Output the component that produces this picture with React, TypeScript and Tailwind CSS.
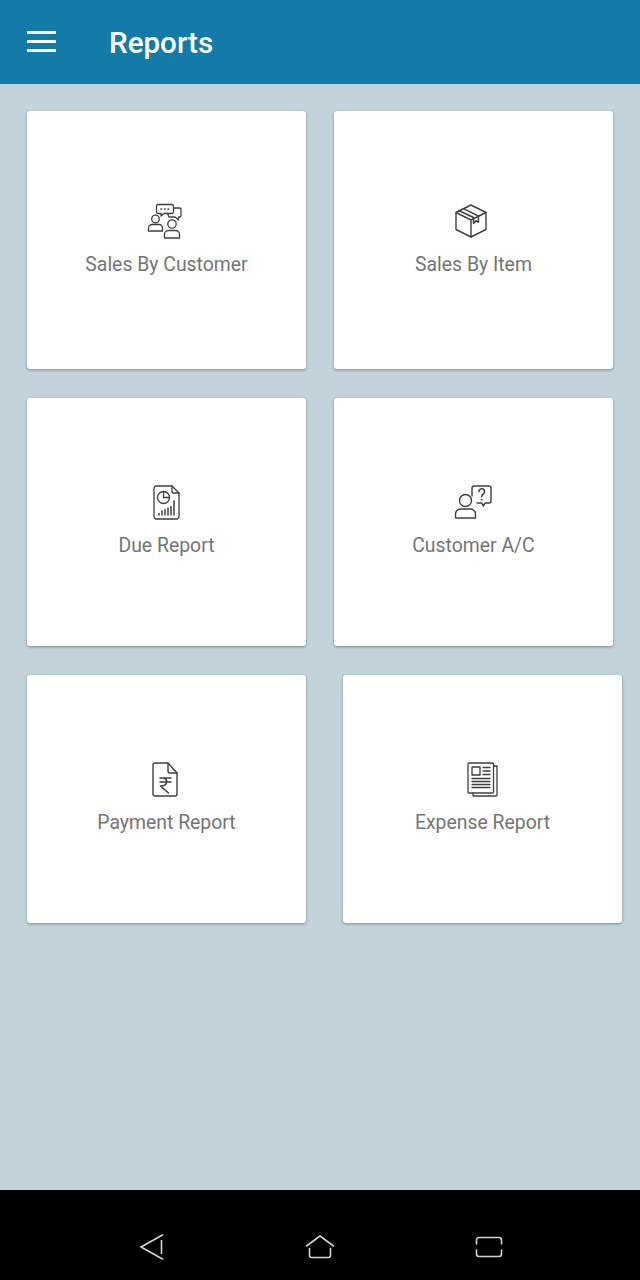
const CustomersIcon = () => (
  <svg className="mr-[4px]" width="36" height="36" viewBox="0 0 36 36" fill="none" stroke="#3f3f3f" strokeWidth="1.3" strokeLinejoin="round" strokeLinecap="round">
    <path d="M11 1.500h14a1.500 1.500 0 0 1 1.500 1.500v6a1.500 1.500 0 0 1-1.500 1.500h-8l-3 2.500v-2.500h-3a1.500 1.500 0 0 1-1.500-1.500v-6a1.500 1.500 0 0 1 1.500-1.500z" />
    <path d="M26.500 5h6a1.500 1.500 0 0 1 1.500 1.500v6a1.500 1.500 0 0 1-1.500 1.500h-1v3l-3.500-3h-6l-1.500-3.500" />
    <path d="M14 6h.6M17.500 6h.6M21 6h.6" strokeWidth="1.600" />
    <circle cx="8.500" cy="16" r="3.800" />
    <path d="M1.500 28v-3a3.500 3.500 0 0 1 3.500-3.500h7a3.500 3.500 0 0 1 3.500 3.500v3z" />
    <circle cx="25" cy="21" r="4.200" />
    <path d="M17.500 35v-3.500a4 4 0 0 1 4-4h7a4 4 0 0 1 4 4v3.500z" />
  </svg>
);

const BoxIcon = () => (
  <svg className="mr-[6px]" width="34" height="36" viewBox="0 0 34 36" fill="none" stroke="#3f3f3f" strokeWidth="1.400" strokeLinejoin="round" strokeLinecap="round">
    <path d="M17 2 32 9.500v17L17 34 2 26.500v-17z" />
    <path d="M2 9.500 17 17 32 9.500M17 17v17" />
    <path d="M9.500 5.700 24.500 13.200v6l-2.500-1.500-2.500 2.800v-6L4.700 7.500" />
  </svg>
);

const DueIcon = () => (
  <svg width="27" height="35" viewBox="0 0 27 35" fill="none" stroke="#3f3f3f" strokeWidth="1.300" strokeLinejoin="round" strokeLinecap="round">
    <path d="M3 1h16l7 7v23.500a2.500 2.500 0 0 1-2.500 2.500H3a2.500 2.500 0 0 1-2-2.500V3.500A2.500 2.500 0 0 1 3 1z" />
    <path d="M19 1v5a2 2 0 0 0 2 2h5" />
    <circle cx="10.500" cy="12.500" r="6" />
    <path d="M10.500 6.500v6h6" />
    <path d="M6 30v-1.500M9 30v-4M12 30v-5.500M15 30v-7M18 30v-8.500M21 30V16" strokeWidth="1.500" />
  </svg>
);

const QuestionIcon = () => (
  <svg className="mr-[2px]" width="38" height="34" viewBox="0 0 38 34" fill="none" stroke="#3f3f3f" strokeWidth="1.400" strokeLinejoin="round" strokeLinecap="round">
    <path d="M18 11V3a2 2 0 0 1 1.500-2H35a2 2 0 0 1 2 2v13a2 2 0 0 1-2 2h-4l-1.500 3-2-3H23" />
    <path d="M25 6.500a2.800 2.800 0 1 1 4.500 2.300c-1.200.9-1.700 1.400-1.700 2.700M27.800 14.500v.3" strokeWidth="1.600" />
    <circle cx="11.500" cy="15.500" r="6" />
    <path d="M1.500 33v-4a5 5 0 0 1 5-5h10a5 5 0 0 1 5 5v4z" />
  </svg>
);

const RupeeIcon = () => (
  <svg className="mr-[4px]" width="26" height="35" viewBox="0 0 26 35" fill="none" stroke="#3f3f3f" strokeWidth="1.400" strokeLinejoin="round" strokeLinecap="round">
    <path d="M3 1h13l9 10v21a2 2 0 0 1-2 2H3a2 2 0 0 1-2-2V3a2 2 0 0 1 2-2z" />
    <path d="M16 1v8a2 2 0 0 0 2 2h7" />
    <path d="M8 16h11M8 20h11M11 16c5 0 5.500 8-2.500 8l8 7" strokeWidth="1.600" />
  </svg>
);

const NewsIcon = () => (
  <svg width="31" height="35" viewBox="0 0 31 35" fill="none" stroke="#3f3f3f" strokeWidth="1.300" strokeLinejoin="round" strokeLinecap="round">
    <rect x="1" y="1" width="25.500" height="30" rx="1" />
    <path d="M26.500 4H30v29a1 1 0 0 1-1 1H6v-3" />
    <rect x="5" y="5" width="8" height="8" />
    <path d="M16 5.500h7M16 9h7M16 12.500h7M5 16.500h18M5 19.500h18M5 22.500h18M5 25.500h18" />
  </svg>
);

const ReportCard = ({ icon, label, className }: { icon: React.ReactNode; label: string; className: string }) => (
  <div className={`flex w-[279px] flex-col items-center justify-center rounded-[3px] bg-white shadow-[0_1px_3px_rgba(0,0,0,0.35)] ${className}`}>
    <div className="flex h-9 items-center justify-center">{icon}</div>
    <span className="mt-[14px] text-[19.400px] leading-[24px] text-[#757575]">{label}</span>
  </div>
);

export default function App() {
  return (
    <div className="flex h-[1280px] w-[640px] flex-col overflow-hidden bg-[#c2d3da] font-['Roboto',sans-serif]">
      {/* Toolbar */}
      <header className="flex h-[84px] shrink-0 items-center bg-[#127ba8]">
        <button className="ml-[27px] flex w-[29px] flex-col gap-[6px] pb-[2px]">
          <span className="h-[3px] bg-white" />
          <span className="h-[3px] bg-white" />
          <span className="h-[3px] bg-white" />
        </button>
        <h1 className="ml-[53px] mt-[4px] text-[29.600px] font-medium leading-none text-white">Reports</h1>
      </header>

      {/* Report cards */}
      <main className="flex flex-1 flex-col gap-[29px] pl-[27px] pt-[27px]">
        <div className="flex gap-[28px]">
          <ReportCard className="h-[258px]" icon={<CustomersIcon />} label="Sales By Customer" />
          <ReportCard className="h-[258px]" icon={<BoxIcon />} label="Sales By Item" />
        </div>
        <div className="flex gap-[28px]">
          <ReportCard className="h-[248px] pb-[2px]" icon={<DueIcon />} label="Due Report" />
          <ReportCard className="h-[248px] pb-[2px]" icon={<QuestionIcon />} label="Customer A/C" />
        </div>
        <div className="flex gap-[37px]">
          <ReportCard className="h-[248px] pb-[2px]" icon={<RupeeIcon />} label="Payment Report" />
          <ReportCard className="h-[248px] pb-[2px]" icon={<NewsIcon />} label="Expense Report" />
        </div>
      </main>

      {/* Android nav bar */}
      <footer className="flex h-[90px] shrink-0 items-center justify-between bg-black pl-[139px] pr-[137px] pt-[23px]">
        <svg width="26" height="28" viewBox="0 0 26 28" fill="none" stroke="#d4d4d4" strokeWidth="1.600" strokeLinecap="round">
          <path d="M23.500 2 2 14l21.500 12M22.500 7.500v13" />
        </svg>
        <svg width="30" height="26" viewBox="0 0 30 26" fill="none" stroke="#d4d4d4" strokeWidth="1.600" strokeLinecap="round" strokeLinejoin="round">
          <path d="M1.500 12 15 2l13.500 10M4.500 14.500v7a2 2 0 0 0 2 2h17a2 2 0 0 0 2-2v-7" />
        </svg>
        <svg width="28" height="22" viewBox="0 0 28 22" fill="none" stroke="#d4d4d4" strokeWidth="1.600" strokeLinecap="round">
          <path d="M1.500 8V4a2.500 2.500 0 0 1 2.500-2.500h20A2.500 2.500 0 0 1 26.500 4v4M1.500 14v4A2.500 2.500 0 0 0 4 20.500h20a2.500 2.500 0 0 0 2.500-2.500v-4" />
        </svg>
      </footer>
    </div>
  );
}
